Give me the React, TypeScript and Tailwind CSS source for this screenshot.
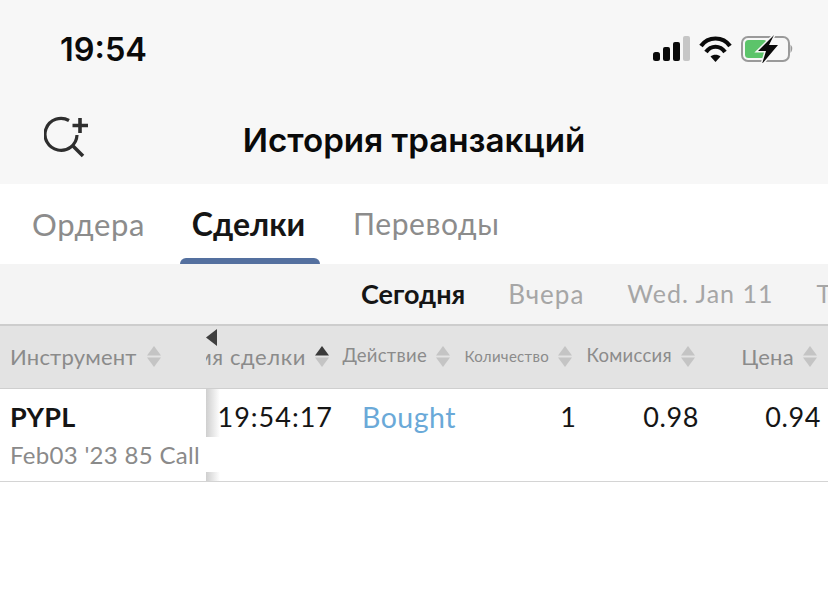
const sans = "font-['Lato','Noto_Sans',sans-serif]";

function SortIcon({ active = false }: { active?: boolean }) {
  return (
    <svg width="14" height="21" viewBox="0 0 14 21" className="shrink-0">
      <path d="M7 0 L14 9.500 H0 Z" fill={active ? "#3a3a3a" : "#c4c4c4"} />
      <path d="M7 21 L14 11.500 H0 Z" fill="#c4c4c4" />
    </svg>
  );
}

function HeaderCell({ label, width, size = "text-[20px]" }: { label: string; width: string; size?: string }) {
  return (
    <div className={`${width} pr-[1px] pb-[2px] shrink-0 flex items-center justify-end gap-[9px] overflow-hidden whitespace-nowrap`}>
      <span className={`${size} tracking-[0.3px] text-[#8b8b8b]`}>{label}</span>
      <SortIcon />
    </div>
  );
}

export default function App() {
  return (
    <div className={`w-[828px] h-[607px] overflow-hidden bg-white ${sans}`}>
      {/* status bar + title */}
      <div className="h-[184px] bg-[#f7f7f7] flex flex-col">
        <div className="h-[100px] flex items-center justify-between pl-[60px] pr-[34px] pt-[1px]">
          <span className="text-[32.5px] font-semibold text-[#0a0a0a] font-['Inter',sans-serif]">19:54</span>
          <svg width="142" height="30" viewBox="0 0 142 30" className="mb-[6px]">
            <rect x="1" y="19" width="7" height="9" rx="2.5" fill="#0a0a0a" />
            <rect x="11" y="14" width="7" height="14" rx="2" fill="#0a0a0a" />
            <rect x="21" y="9" width="7" height="19" rx="2" fill="#0a0a0a" />
            <rect x="31" y="3" width="7" height="25" rx="2" fill="#c6c6c6" />
            <path d="M49 13 C56 3 71 3 78 13" fill="none" stroke="#0a0a0a" strokeWidth="4.2" />
            <path d="M54 19 C59 12 68 12 73 19" fill="none" stroke="#0a0a0a" strokeWidth="4.2" />
            <path d="M63.500 29 L58.500 23.500 C61 21 66 21 68.500 23.500 Z" fill="#0a0a0a" />
            <rect x="90" y="4" width="47" height="24" rx="6" fill="none" stroke="#9a9a9a" strokeWidth="2" />
            <rect x="93" y="7" width="22" height="18" rx="3.500" fill="#5cc46a" />
            <path d="M138.500 11.500 Q142 15.500 138.500 20 Z" fill="#9a9a9a" />
            <path d="M122 2 L106 18 H114 L110 31 L126 12 H117 Z" fill="#f7f7f7" stroke="#f7f7f7" strokeWidth="3" />
            <path d="M122 2 L106 18 H114 L110 31 L126 12 H117 Z" fill="#0a0a0a" />
          </svg>
        </div>
        <div className="relative h-[84px] flex items-center justify-center pb-[2px]">
          <svg width="44" height="44" viewBox="0 0 44 44" className="absolute left-[44px] top-[16px]">
            <path d="M25 4.500 A16 16 0 1 0 33 19" fill="none" stroke="#2e2e2e" strokeWidth="3.2" />
            <path d="M29 30 L39 40" stroke="#2e2e2e" strokeWidth="3.6" />
            <path d="M36 2 V17 M28.500 9.500 H44" stroke="#2e2e2e" strokeWidth="3.6" />
          </svg>
          <h1 className="text-[33.2px] font-semibold text-[#0a0a0a] font-['Inter',sans-serif]">История транзакций</h1>
        </div>
      </div>

      {/* tabs */}
      <div className="h-[80px] bg-white flex items-stretch pl-[20px]">
        <div className="w-[137px] flex justify-center pt-[17px] text-[31px] text-[#8c8c8c] tracking-[0.6px]">Ордера</div>
        <div className="w-[140px] ml-[23px] flex flex-col justify-between items-center">
          <span className="pt-[16px] pr-[3px] text-[32px] font-bold text-[#151515]">Сделки</span>
          <div className="w-full h-[6px] rounded-t-[6px] bg-[#54709f]" />
        </div>
        <div className="ml-[33px] pt-[17px] text-[30px] text-[#8c8c8c] tracking-[0.6px]">Переводы</div>
      </div>

      {/* date strip */}
      <div className="h-[62px] bg-[#f4f4f4] border-b-2 border-[#cdcdcd] flex items-center pl-[361px] whitespace-nowrap overflow-hidden text-[25px] text-[#a6a6a6] tracking-[1px] gap-[43px]">
        <span className="text-[27px] font-bold text-[#151515] tracking-normal">Сегодня</span>
        <span className="text-[26px]">Вчера</span>
        <span>Wed. Jan 11</span>
        <span>Tue. Jan 10</span>
      </div>

      {/* table head */}
      <div className="relative h-[63px] bg-[#e3e3e3] border-b border-[#cfcfcf] flex items-stretch overflow-hidden">
        <div className="w-[206px] shrink-0 flex items-center gap-[10px] pl-[10px] pb-[2px] bg-[#e3e3e3]">
          <span className="text-[22px] tracking-[0.2px] text-[#8b8b8b]">Инструмент</span>
          <SortIcon />
        </div>
        <div className="w-[124px] pr-[1px] pb-[2px] shrink-0 flex items-center justify-end overflow-hidden gap-[9px]">
          <span className="text-[22px] tracking-[0.6px] text-[#8b8b8b] whitespace-nowrap">Время сделки</span>
          <SortIcon active />
        </div>
        <HeaderCell label="Действие" width="w-[121px]" size="text-[18.5px]" />
        <HeaderCell label="Количество" width="w-[122px]" size="text-[15px]" />
        <HeaderCell label="Комиссия" width="w-[123px]" size="text-[18.5px]" />
        <HeaderCell label="Цена" width="w-[122px]" size="text-[22px]" />
        <svg width="11" height="17" viewBox="0 0 11 17" className="absolute left-[206px] top-[3px]">
          <path d="M11 0 V17 L0 8.500 Z" fill="#3f3f3f" />
        </svg>
      </div>

      {/* table row */}
      <div className="relative h-[93px] border-b border-[#d4d4d4] flex items-start">
        <div className="w-[206px] shrink-0 pl-[10px] pt-[12px] text-[27px] leading-[32px] font-bold text-[#151515] tracking-[0.3px]">PYPL</div>
        <div className="absolute left-[206px] top-0 bottom-0 w-[14px] bg-gradient-to-r from-[#cfcfcf] to-white" />
        <div className="w-[127px] shrink-0 pt-[12px] text-right text-[27px] leading-[32px] text-[#151515] tracking-[1px] relative">19:54:17</div>
        <div className="pl-[29px] w-[130px] shrink-0 pt-[12px] text-[28.5px] leading-[32px] text-[#6aa9d8] tracking-[0.5px] relative">Bought</div>
        <div className="w-[113px] shrink-0 pt-[12px] text-right text-[27px] leading-[32px] text-[#151515]">1</div>
        <div className="w-[123px] shrink-0 pt-[12px] text-right text-[27px] leading-[32px] text-[#151515] tracking-[0.6px]">0.98</div>
        <div className="w-[122px] shrink-0 pt-[12px] text-right text-[27px] leading-[32px] text-[#151515] tracking-[0.6px]">0.94</div>
        <div className="absolute left-0 top-[48px] h-[35px] w-[220px] bg-white pl-[10px] text-[24px] leading-[35px] text-[#8a8a8a] tracking-[0.3px] whitespace-nowrap">Feb03 '23 85 Call</div>
      </div>
    </div>
  );
}
